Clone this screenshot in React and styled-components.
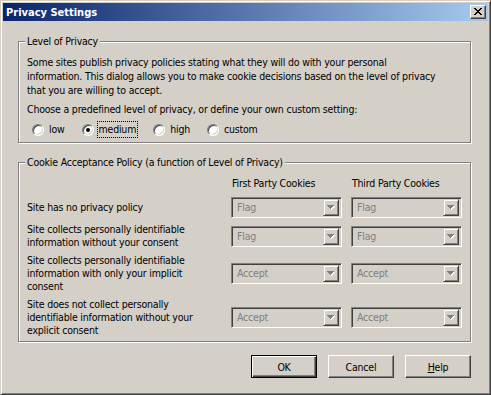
import styled, { createGlobalStyle } from 'styled-components'

const GlobalStyle = createGlobalStyle`
    html, body {
        margin: 0;
        padding: 0;
        background: #d4d0c8;
    }
    body {
        font-family: Tahoma, "DejaVu Sans Condensed", "Liberation Sans", sans-serif;
        font-size: 10.5px;
        letter-spacing: -0.2px;
        color: #000;
    }
`

const Window = styled.div`
    width: 491px;
    height: 395px;
    box-sizing: border-box;
    display: flex;
    flex-direction: column;
    padding: 2px;
    background: #d4d0c8;
    border: 1px solid;
    border-color: #d4d0c8 #404040 #404040 #d4d0c8;
    box-shadow: inset 1px 1px 0 #fff, inset -1px -1px 0 #808080;
`

const TitleBar = styled.div`
    height: 18px;
    display: flex;
    align-items: center;
    padding: 0 2px 0 3px;
    background: linear-gradient(to right, #0a246a, #a6caf0);
`

const Title = styled.span`
    color: #fff;
    font-size: 11px;
    font-weight: bold;
    letter-spacing: 0;
`

const CloseButton = styled.div`
    margin-left: auto;
    width: 16px;
    height: 14px;
    box-sizing: border-box;
    display: flex;
    align-items: center;
    justify-content: center;
    background: #d4d0c8;
    border: 1px solid;
    border-color: #fff #404040 #404040 #fff;
    box-shadow: inset -1px -1px 0 #808080;
    padding: 0 1px 1px 0;
`

const Body = styled.div`
    flex: 1;
    display: flex;
    flex-direction: column;
    padding: 14px 17px 0 15px;
`

const Group = styled.fieldset`
    margin: 0 0 ${p => p.$mb || 0}px;
    padding: 0 8px ${p => p.$pb}px;
    border: 1px solid #808080;
    box-shadow: 1px 1px 0 #fff, inset 1px 1px 0 #fff;
    min-width: 0;
`

const Legend = styled.legend`
    margin-left: -2px;
    padding: 0 2px;
    line-height: 13px;
    background: #d4d0c8;
`

const Para = styled.p`
    margin: ${p => p.$mt}px 0 0;
    line-height: 14px;
    white-space: nowrap;
`

const RadioRow = styled.div`
    display: flex;
    align-items: center;
    gap: 15px;
    margin: 5px 0 0 5px;
`

const RadioItem = styled.label`
    display: flex;
    align-items: center;
    gap: 3px;
`

const RadioCircle = styled.span`
    width: 12px;
    height: 12px;
    box-sizing: border-box;
    border-radius: 50%;
    display: flex;
    align-items: center;
    justify-content: center;
    background: #fff;
    border: 1px solid;
    border-color: #808080 #fff #fff #808080;
    box-shadow: inset 1px 1px 0 #404040, inset -1px -1px 0 #d4d0c8;

    &::after {
        content: '';
        width: 4px;
        height: 4px;
        border-radius: 50%;
        background: ${p => (p.$checked ? '#000' : 'transparent')};
    }
`

const RadioText = styled.span`
    padding: 1px 1px;
    line-height: 13px;
    border: 1px dotted ${p => (p.$focus ? '#000' : 'transparent')};
`

const PolicyGrid = styled.div`
    display: grid;
    grid-template-columns: 1fr 111px 111px;
    column-gap: 9px;
    row-gap: 5px;
    align-items: center;
    margin-top: 8px;
    line-height: 13px;
`

const ColumnHead = styled.div`
    padding-left: 1px;
    margin-bottom: 2px;
`

const RowText = styled.div`
    white-space: nowrap;
`

const Combo = styled.div`
    height: 21px;
    box-sizing: border-box;
    display: flex;
    align-items: center;
    padding: 2px 2px 2px 5px;
    border: 1px solid;
    border-color: #808080 #fff #fff #808080;
    box-shadow: inset 1px 1px 0 #404040, inset -1px -1px 0 #d4d0c8;
    color: #808080;
`

const ComboValue = styled.span`
    flex: 1;
`

const ComboArrow = styled.div`
    width: 16px;
    height: 17px;
    box-sizing: border-box;
    display: flex;
    align-items: center;
    justify-content: center;
    border: 1px solid;
    border-color: #d4d0c8 #404040 #404040 #d4d0c8;
    box-shadow: inset 1px 1px 0 #fff, inset -1px -1px 0 #808080;
`

const ButtonRow = styled.div`
    display: flex;
    justify-content: flex-end;
    gap: 11px;
    margin-top: 13px;
`

const Button = styled.div`
    width: 66px;
    height: 23px;
    box-sizing: border-box;
    display: flex;
    align-items: center;
    justify-content: center;
    border: 1px solid;
    border-color: ${p => (p.$default ? '#000' : '#fff #404040 #404040 #fff')};
    box-shadow: ${p => (p.$default
        ? 'inset 1px 1px 0 #fff, inset -1px -1px 0 #404040, inset -2px -2px 0 #808080'
        : 'inset -1px -1px 0 #808080')};
`

function CloseGlyph() {
    const px = [
        [0, 0], [1, 0], [6, 0], [7, 0],
        [1, 1], [2, 1], [5, 1], [6, 1],
        [2, 2], [3, 2], [4, 2], [5, 2],
        [3, 3], [4, 3],
        [2, 4], [3, 4], [4, 4], [5, 4],
        [1, 5], [2, 5], [5, 5], [6, 5],
        [0, 6], [1, 6], [6, 6], [7, 6],
    ]
    return (
        <svg width="8" height="7" viewBox="0 0 8 7" shapeRendering="crispEdges">
            {px.map(([x, y]) => <rect key={x + '-' + y} x={x} y={y} width="1" height="1" fill="#000" />)}
        </svg>
    )
}

function ArrowGlyph() {
    return (
        <svg width="8" height="5" viewBox="0 0 8 5" shapeRendering="crispEdges">
            <path d="M1 1h7v1h-1v1h-1v1h-1v1h-1v-1h-1v-1h-1v-1h-1z" fill="#fff" />
            <path d="M0 0h7v1h-1v1h-1v1h-1v1h-1v-1h-1v-1h-1v-1h-1z" fill="#808080" />
        </svg>
    )
}

const levels = [
    { label: 'low' },
    { label: 'medium', checked: true },
    { label: 'high' },
    { label: 'custom' },
]

const policies = [
    { text: ['Site has no privacy policy'], first: 'Flag', third: 'Flag' },
    { text: ['Site collects personally identifiable', 'information without your consent'], first: 'Flag', third: 'Flag' },
    { text: ['Site collects personally identifiable', 'information with only your implicit', 'consent'], first: 'Accept', third: 'Accept' },
    { text: ['Site does not collect personally', 'identifiable information without your', 'explicit consent'], first: 'Accept', third: 'Accept' },
]

function ComboBox({ value }) {
    return (
        <Combo>
            <ComboValue>{value}</ComboValue>
            <ComboArrow><ArrowGlyph /></ComboArrow>
        </Combo>
    )
}

export default function App() {
    return (
        <>
            <GlobalStyle />
            <Window>
                <TitleBar>
                    <Title>Privacy Settings</Title>
                    <CloseButton><CloseGlyph /></CloseButton>
                </TitleBar>
                <Body>
                    <Group $pb={4} $mb={13}>
                        <Legend>Level of Privacy</Legend>
                        <Para $mt={7}>
                            Some sites publish privacy policies stating what they will do with your personal<br />
                            information. This dialog allows you to make cookie decisions based on the level of privacy<br />
                            that you are willing to accept.
                        </Para>
                        <Para $mt={5}>Choose a predefined level of privacy, or define your own custom setting:</Para>
                        <RadioRow>
                            {levels.map(l => (
                                <RadioItem key={l.label}>
                                    <RadioCircle $checked={l.checked} />
                                    <RadioText $focus={l.checked}>{l.label}</RadioText>
                                </RadioItem>
                            ))}
                        </RadioRow>
                    </Group>
                    <Group $pb={4}>
                        <Legend>Cookie Acceptance Policy (a function of Level of Privacy)</Legend>
                        <PolicyGrid>
                            <div />
                            <ColumnHead>First Party Cookies</ColumnHead>
                            <ColumnHead>Third Party Cookies</ColumnHead>
                            {policies.map((p, i) => [
                                <RowText key={'t' + i}>
                                    {p.text.map((line, j) => <div key={j}>{line}</div>)}
                                </RowText>,
                                <ComboBox key={'f' + i} value={p.first} />,
                                <ComboBox key={'s' + i} value={p.third} />,
                            ])}
                        </PolicyGrid>
                    </Group>
                    <ButtonRow>
                        <Button $default>OK</Button>
                        <Button>Cancel</Button>
                        <Button><span><u>H</u>elp</span></Button>
                    </ButtonRow>
                </Body>
            </Window>
        </>
    )
}
